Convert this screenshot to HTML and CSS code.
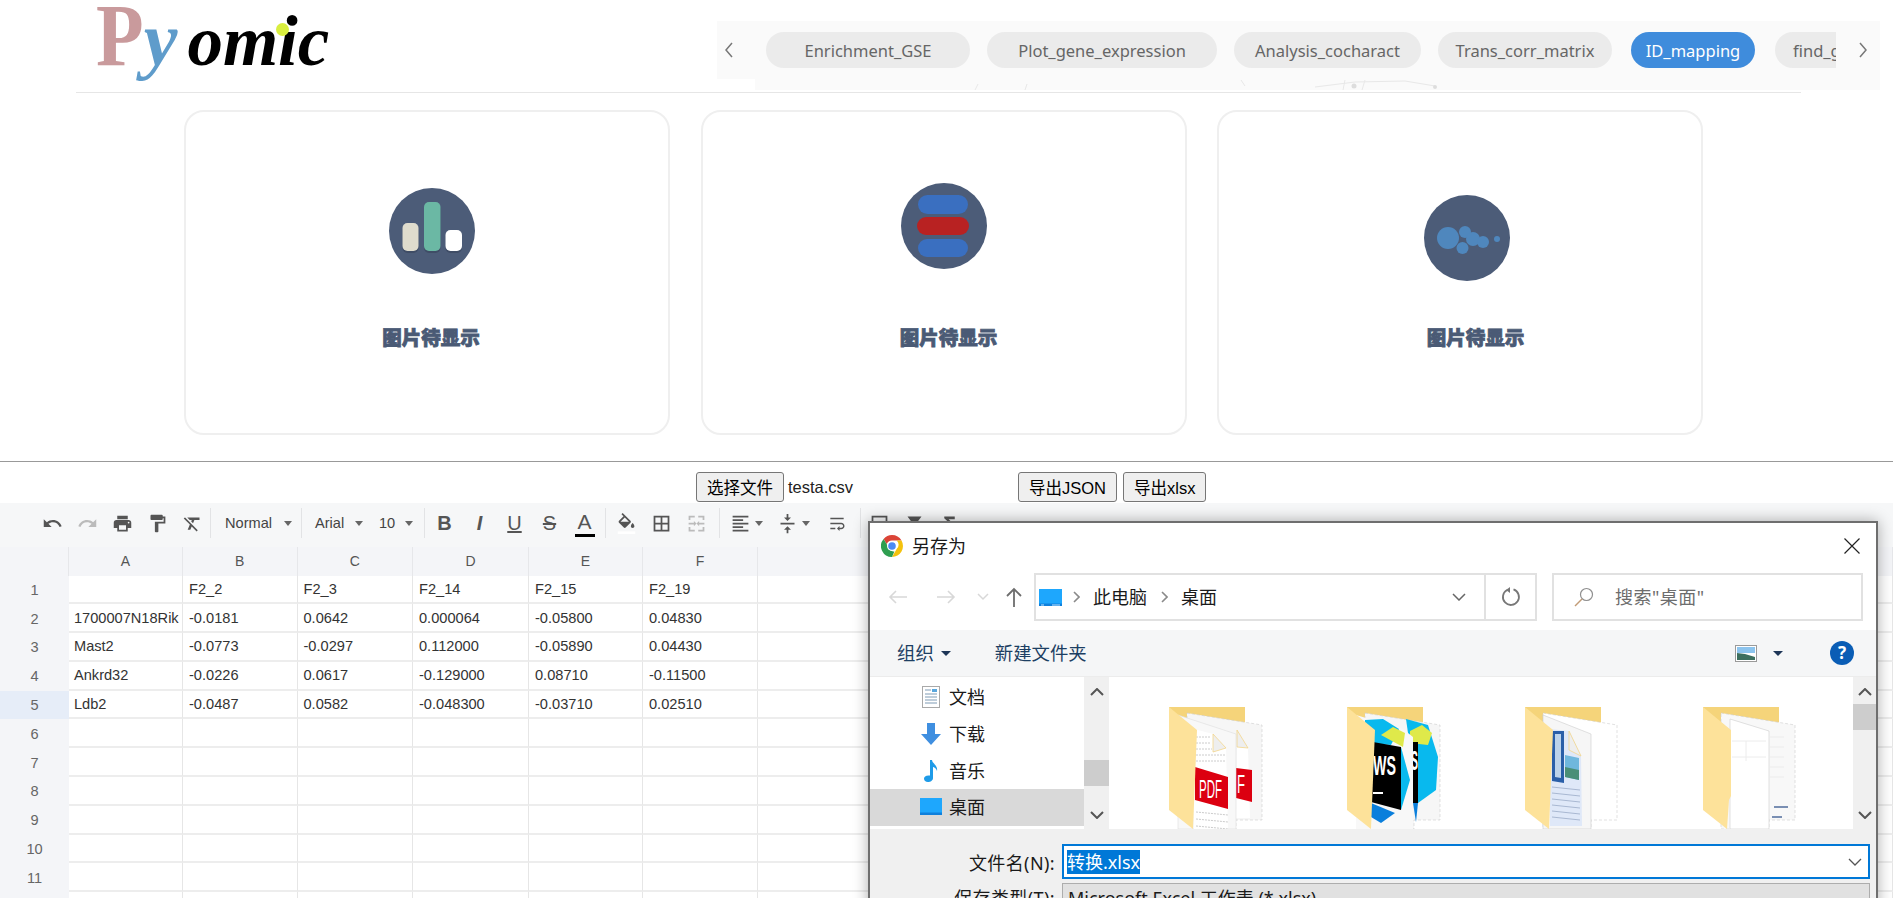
FILE: index.html
```html
<!DOCTYPE html>
<html lang="zh-CN">
<head>
    <meta charset="UTF-8">
    <meta name="viewport" content="width=device-width, initial-scale=1.0">
    <title>Pyomic</title>
    <link rel="stylesheet" href="styles.css">
</head>
<body>
    <header class="header">
        <div class="logo"><span class="logo-p">P</span><span class="logo-y">y</span><span class="logo-rest">omic</span><i class="logo-dot"></i></div>
        <div class="tab-area">
            <nav class="tab-bar">
                <svg class="tab-arrow" viewBox="0 0 12 20"><path d="M9 3L3 10l6 7" fill="none" stroke="#777" stroke-width="1.5"/></svg>
                <div class="tabs">
                    <span class="tab">Enrichment_GSE</span>
                    <span class="tab">Plot_gene_expression</span>
                    <span class="tab">Analysis_cocharact</span>
                    <span class="tab">Trans_corr_matrix</span>
                    <span class="tab active">ID_mapping</span>
                    <span class="tab">find_gene</span>
                </div>
                <svg class="tab-arrow" viewBox="0 0 12 20"><path d="M3 3l6 7-6 7" fill="none" stroke="#777" stroke-width="1.5"/></svg>
            </nav>
            <div class="tab-strip">
                <svg viewBox="0 0 1125 11" preserveAspectRatio="none"><path d="M220 11l3-6M270 11l2-6M490 7l-4-6M560 8l40-5 50-1 30 5M590 1l-2 10M610 1l-3 10" fill="none" stroke="#e8e8e8"/><circle cx="599" cy="7" r="2.5" fill="#ddd"/><circle cx="680" cy="8" r="2" fill="#ddd"/></svg>
            </div>
        </div>
    </header>
    <div class="header-rule"></div>

    <section class="cards">
        <div class="card">
            <svg class="pic pic-bars" viewBox="0 0 86 86">
                <circle cx="43" cy="43" r="43" fill="#4c5c78"/>
                <rect x="13.5" y="37" width="16" height="28" rx="5" fill="#3f4d66"/>
                <rect x="13.5" y="35" width="16" height="28" rx="5" fill="#dfdccd"/>
                <rect x="35" y="16" width="16.5" height="49" rx="5" fill="#3f4d66"/>
                <rect x="35" y="14" width="16.5" height="49" rx="5" fill="#6bb8a4"/>
                <rect x="56.5" y="44" width="16.5" height="21" rx="5" fill="#3f4d66"/>
                <rect x="56.5" y="42" width="16.5" height="21" rx="5" fill="#fff"/>
            </svg>
            <p class="pic-label label-bars">图片待显示</p>
        </div>
        <div class="card">
            <svg class="pic pic-stack" viewBox="0 0 86 86">
                <circle cx="43" cy="43" r="43" fill="#4c5c78"/>
                <rect x="17" y="12" width="50" height="19" rx="9.5" fill="#3a6fc0"/>
                <rect x="16" y="34" width="52" height="18" rx="9" fill="#b82222"/>
                <rect x="17" y="56" width="50" height="18" rx="9" fill="#3a6fc0"/>
            </svg>
            <p class="pic-label label-stack">图片待显示</p>
        </div>
        <div class="card">
            <svg class="pic pic-bubbles" viewBox="0 0 86 86">
                <circle cx="43" cy="43" r="43" fill="#4c5c78"/>
                <g fill="#4f87bd">
                    <circle cx="24" cy="43" r="11"/>
                    <circle cx="41" cy="37" r="6"/>
                    <circle cx="49" cy="44" r="7"/>
                    <circle cx="59" cy="47" r="6"/>
                    <circle cx="38.5" cy="53" r="6"/>
                    <circle cx="73" cy="44" r="3"/>
                </g>
            </svg>
            <p class="pic-label label-bubbles">图片待显示</p>
        </div>
    </section>

    <div class="upload-row">
        <button class="btn">选择文件</button>
        <span class="file-name">testa.csv</span>
        <button class="btn">导出JSON</button>
        <button class="btn">导出xlsx</button>
    </div>

    <div class="sheet-toolbar">
        <span class="tool"><svg viewBox="0 0 24 24"><path d="M12.5 8c-2.65 0-5.05.99-6.9 2.6L2 7v9h9l-3.62-3.62c1.39-1.16 3.16-1.88 5.12-1.88 3.54 0 6.55 2.31 7.6 5.5l2.37-.78C21.08 11.03 17.15 8 12.5 8z"/></svg></span>
        <span class="tool off"><svg viewBox="0 0 24 24"><path d="M18.4 10.6C16.55 8.99 14.15 8 11.5 8c-4.65 0-8.58 3.03-9.96 7.22L3.9 16c1.05-3.19 4.05-5.5 7.6-5.5 1.95 0 3.73.72 5.12 1.88L13 16h9V7l-3.6 3.6z"/></svg></span>
        <span class="tool"><svg viewBox="0 0 24 24"><path d="M19 8H5c-1.66 0-3 1.34-3 3v6h4v4h12v-4h4v-6c0-1.66-1.34-3-3-3zm-3 11H8v-5h8v5zm3-7c-.55 0-1-.45-1-1s.45-1 1-1 1 .45 1 1-.45 1-1 1zm-1-9H6v4h12V3z"/></svg></span>
        <span class="tool"><svg viewBox="0 0 24 24"><path d="M18 4V3c0-.55-.45-1-1-1H5c-.55 0-1 .45-1 1v4c0 .55.45 1 1 1h12c.55 0 1-.45 1-1V6h1v4H9v11c0 .55.45 1 1 1h2c.55 0 1-.45 1-1v-9h8V4h-3z"/></svg></span>
        <span class="tool"><svg viewBox="0 0 24 24"><path d="M3.27 5L2 6.27l6.97 6.97L6.5 19h3l1.57-3.66L16.73 21 18 19.73 3.55 5.27 3.27 5zM6 5v.18L8.82 8h2.4l-.72 1.68 2.1 2.1L14.21 8H20V5H6z"/></svg></span>
        <i class="sep"></i>
        <span class="pick pick-style">Normal<b class="caret"></b></span>
        <i class="sep sep-style"></i>
        <span class="pick pick-font">Arial<b class="caret"></b></span>
        <span class="pick pick-size">10<b class="caret"></b></span>
        <i class="sep sep-size"></i>
        <span class="tool letter first-letter"><b>B</b></span>
        <span class="tool letter"><b><em>I</em></b></span>
        <span class="tool letter"><u>U</u></span>
        <span class="tool letter"><s>S</s></span>
        <span class="tool letter color-a">A</span>
        <i class="sep sep-text"></i>
        <span class="tool tool-fill"><svg viewBox="0 0 24 24"><path d="M16.56 8.94L7.62 0 6.21 1.41l2.38 2.38-5.15 5.15c-.59.59-.59 1.54 0 2.12l5.5 5.5c.29.29.68.44 1.06.44s.77-.15 1.06-.44l5.5-5.5c.59-.58.59-1.53 0-2.12zM5.21 10L10 5.21 14.79 10H5.21zM19 11.5s-2 2.17-2 3.5c0 1.1.9 2 2 2s2-.9 2-2c0-1.33-2-3.5-2-3.5z"/><path d="M2 21h20v3H2z" fill="#fff"/></svg></span>
        <span class="tool"><svg viewBox="0 0 24 24"><path d="M3 3v18h18V3H3zm8 16H5v-6h6v6zm0-8H5V5h6v6zm8 8h-6v-6h6v6zm0-8h-6V5h6v6z"/></svg></span>
        <span class="tool off"><svg viewBox="0 0 24 24"><path d="M3 3h7v2H5v3H3zm11 0h7v5h-2V5h-5zM3 16h2v3h5v2H3zm16 0h2v5h-7v-2h5zM3 11h6V9l3 3-3 3v-2H3zm18 0v2h-6v2l-3-3 3-3v2z"/></svg></span>
        <i class="sep sep-grid"></i>
        <span class="tool tool-caret tool-align"><svg viewBox="0 0 24 24"><path d="M15 15H3v2h12v-2zm0-8H3v2h12V7zM3 13h18v-2H3v2zm0 8h18v-2H3v2zM3 3v2h18V3H3z"/></svg><b class="caret"></b></span>
        <span class="tool tool-caret tool-valign"><svg viewBox="0 0 24 24"><path d="M8 19h3v4h2v-4h3l-4-4-4 4zm8-14h-3V1h-2v4H8l4 4 4-4zM4 11v2h16v-2H4z"/></svg><b class="caret"></b></span>
        <span class="tool tool-wrap"><svg viewBox="0 0 24 24"><path d="M4 19h6v-2H4v2zM20 5H4v2h16V5zm-3 6H4v2h13.25c1.1 0 2 .9 2 2s-.9 2-2 2H15v-2l-3 3 3 3v-2h2c2.21 0 4-1.79 4-4s-1.79-4-4-4z"/></svg></span>
        <i class="sep sep-wrap"></i>
        <span class="tool tool-tail"><svg viewBox="0 0 24 24"><path d="M3 3h18v18H3zm2 2v14h14V5z"/></svg></span>
        <span class="tool"><svg viewBox="0 0 24 24"><path d="M4 4h16l-6 8v7l-4 2v-9z"/></svg></span>
        <span class="tool"><svg viewBox="0 0 24 24"><path d="M18 4H6v2l6.5 6L6 18v2h12v-3h-7l5-5-5-5h7z"/></svg></span>
    </div>

    <table class="grid">
        <colgroup>
            <col class="col-head"><col class="col-a"><col class="col-b"><col class="col-c"><col class="col-d"><col class="col-e"><col class="col-f"><col>
        </colgroup>
        <thead>
            <tr><th></th><th>A</th><th>B</th><th>C</th><th>D</th><th>E</th><th>F</th><th>G</th></tr>
        </thead>
        <tbody>
            <tr><th>1</th><td></td><td>F2_2</td><td>F2_3</td><td>F2_14</td><td>F2_15</td><td>F2_19</td><td></td></tr>
            <tr><th>2</th><td>1700007N18Rik</td><td>-0.0181</td><td>0.0642</td><td>0.000064</td><td>-0.05800</td><td>0.04830</td><td></td></tr>
            <tr><th>3</th><td>Mast2</td><td>-0.0773</td><td>-0.0297</td><td>0.112000</td><td>-0.05890</td><td>0.04430</td><td></td></tr>
            <tr><th>4</th><td>Ankrd32</td><td>-0.0226</td><td>0.0617</td><td>-0.129000</td><td>0.08710</td><td>-0.11500</td><td></td></tr>
            <tr><th class="row-on">5</th><td>Ldb2</td><td>-0.0487</td><td>0.0582</td><td>-0.048300</td><td>-0.03710</td><td>0.02510</td><td></td></tr>
            <tr><th>6</th><td></td><td></td><td></td><td></td><td></td><td></td><td></td></tr>
            <tr><th>7</th><td></td><td></td><td></td><td></td><td></td><td></td><td></td></tr>
            <tr><th>8</th><td></td><td></td><td></td><td></td><td></td><td></td><td></td></tr>
            <tr><th>9</th><td></td><td></td><td></td><td></td><td></td><td></td><td></td></tr>
            <tr><th>10</th><td></td><td></td><td></td><td></td><td></td><td></td><td></td></tr>
            <tr><th>11</th><td></td><td></td><td></td><td></td><td></td><td></td><td></td></tr>
            <tr><th></th><td></td><td></td><td></td><td></td><td></td><td></td><td></td></tr>
        </tbody>
    </table>

    <!-- save dialog over the sheet -->
    <div class="dialog">
        <div class="dlg-title">
            <svg class="chrome" viewBox="0 0 22 22">
                <path d="M11 0a11 11 0 0 1 9.5 5.5H11a5.5 5.5 0 0 0-5.2 3.7L2.6 3.9A11 11 0 0 1 11 0z" fill="#db4437"/>
                <path d="M20.5 5.5A11 11 0 0 1 11 22l4.8-8.2a5.5 5.5 0 0 0-.2-8.3z" fill="#f4c20d"/>
                <path d="M11 22A11 11 0 0 1 2.6 3.9l4.8 8.2a5.5 5.5 0 0 0 6 4.3z" fill="#2f9e50"/>
                <circle cx="11" cy="11" r="5" fill="#fff"/>
                <circle cx="11" cy="11" r="3.8" fill="#4c8bf5"/>
            </svg>
            <span class="dlg-name">另存为</span>
            <svg class="dlg-close" viewBox="0 0 16 16"><path d="M.5.5l15 15M15.5.5l-15 15" stroke="#222" stroke-width="1.2"/></svg>
        </div>
        <div class="dlg-nav">
            <svg class="nav-back" viewBox="0 0 20 14"><path d="M19 7H2m6-6L2 7l6 6" fill="none" stroke="#d8d8d8" stroke-width="1.6"/></svg>
            <svg class="nav-fwd" viewBox="0 0 20 14"><path d="M1 7h17m-6-6l6 6-6 6" fill="none" stroke="#d8d8d8" stroke-width="1.6"/></svg>
            <svg class="nav-down" viewBox="0 0 12 8"><path d="M1 1l5 5 5-5" fill="none" stroke="#d8d8d8" stroke-width="1.5"/></svg>
            <svg class="nav-up" viewBox="0 0 16 20"><path d="M8 20V2M1 9l7-7 7 7" fill="none" stroke="#6d6d6d" stroke-width="1.8"/></svg>
            <div class="address">
                <svg class="desk-icon" viewBox="0 0 23 17"><rect width="23" height="17" fill="#0f80dc"/><rect y="0" width="23" height="14.5" fill="#1ea7fd"/><path d="M2 16h3m8 0h8" stroke="#bfe4ff"/></svg>
                <svg class="crumb" viewBox="0 0 7 12"><path d="M1 1l5 5-5 5" fill="none" stroke="#8a8a8a" stroke-width="1.6"/></svg>
                <span>此电脑</span>
                <svg class="crumb" viewBox="0 0 7 12"><path d="M1 1l5 5-5 5" fill="none" stroke="#8a8a8a" stroke-width="1.6"/></svg>
                <span>桌面</span>
                <svg class="addr-drop" viewBox="0 0 14 8"><path d="M1 1l6 6 6-6" fill="none" stroke="#666" stroke-width="1.5"/></svg>
                <div class="addr-refresh">
                    <svg viewBox="0 0 20 20"><path d="M12.5 2.4A8 8 0 1 1 6 3" fill="none" stroke="#777" stroke-width="1.8"/><path d="M9 0v6L5 3z" fill="#777"/></svg>
                </div>
            </div>
            <div class="search">
                <svg viewBox="0 0 20 20"><circle cx="12.5" cy="7.5" r="6" fill="none" stroke="#8f8f8f" stroke-width="1.2"/><path d="M8 12l-7 7" stroke="#c29b76" stroke-width="1.4"/></svg>
                <span>搜索"桌面"</span>
            </div>
        </div>
        <div class="dlg-toolbar">
            <span>组织</span><b class="dlg-caret"></b>
            <span class="new-folder">新建文件夹</span>
            <svg class="view-icon" viewBox="0 0 22 17"><rect x=".5" y=".5" width="21" height="16" fill="#fff" stroke="#9a9a9a"/><rect x="2" y="2" width="18" height="6" fill="#8cc4ee"/><path d="M2 8l8 1 10 3v3H2z" fill="#3c6f5f"/></svg>
            <b class="dlg-caret view-caret"></b>
            <span class="help">?</span>
        </div>
        <div class="dlg-body">
            <ul class="side-nav">
                <li>
                    <svg viewBox="0 0 24 24"><rect x="3.5" y="1.5" width="17" height="21" fill="#fff" stroke="#a9a9a9"/><path d="M6 5h6M6 9h12M6 12h12M6 15h12M6 18h12" stroke="#7f9bb5"/><rect x="13" y="4" width="5" height="3" fill="#5aa7dd"/></svg>
                    文档
                </li>
                <li>
                    <svg viewBox="0 0 24 24"><path d="M8 1h8v11h6L12 23 2 12h6z" fill="#3f8fe0"/></svg>
                    下载
                </li>
                <li>
                    <svg viewBox="0 0 24 24"><path d="M11 1h2c.5 4 6 5 5 11-1-3-3-4-4-4v11c0 2.5-2.5 4-5 4s-4-1.5-4-3.5S7 16 11 16.5z" fill="#1e9be8"/></svg>
                    音乐
                </li>
                <li class="on">
                    <svg viewBox="0 0 24 24"><rect x="1" y="3" width="22" height="17" fill="#0f80dc"/><rect x="1" y="3" width="22" height="14.5" fill="#1ea7fd"/></svg>
                    桌面
                </li>
            </ul>
            <div class="vscroll vscroll-nav">
                <svg class="chev" viewBox="0 0 14 8"><path d="M1 7l6-6 6 6" fill="none" stroke="#555" stroke-width="2"/></svg>
                <i class="thumb"></i>
                <svg class="chev chev-down" viewBox="0 0 14 8"><path d="M1 1l6 6 6-6" fill="none" stroke="#555" stroke-width="2"/></svg>
            </div>
            <div class="folders">
                <svg class="folder" viewBox="0 0 100 122">
                    <path d="M1 0h76v60H1z" fill="#f5d47a"/>
                    <path d="M19 6l75 12v95H68v9H19z" fill="#f6f6f6" stroke="#ccc" stroke-dasharray="3 2" stroke-width=".6"/>
                    <path d="M69 23l11 18 2 70H68z" fill="#fff"/>
                    <path d="M69 23l11 18-11-1z" fill="#eee" stroke="#f2d68c" stroke-width=".8"/>
                    <path d="M68 61l16 2v32l-16-4z" fill="#dc0010"/>
                    <text class="pdf" x="69" y="86" textLength="8" lengthAdjust="spacingAndGlyphs">F</text>
                    <path d="M10 8l58 19v95H10z" fill="#f8f8f8" stroke="#ddd" stroke-width=".6"/>
                    <path d="M26 22l19 5 13 14 2 81H26z" fill="#fff"/>
                    <path d="M45 27l13 14-13 4z" fill="#eee" stroke="#f2d68c" stroke-width=".8"/>
                    <path d="M28 30h14M28 36h14M28 42h16M28 48h30M28 54h30M28 105l32 3M28 112l32 3M28 119l32 3" stroke="#ccc" stroke-dasharray="2 1"/>
                    <path d="M27 60l33 10v32l-33-9z" fill="#dc0010"/>
                    <text class="pdf" x="31" y="91" textLength="23" lengthAdjust="spacingAndGlyphs">PDF</text>
                    <path d="M1 0l28 23-4 99L1 103z" fill="#fde29a"/>
                </svg>
                <svg class="folder" viewBox="0 0 100 122">
                    <path d="M1 0h76v60H1z" fill="#f5d47a"/>
                    <path d="M19 6l75 12v95H68v9H19z" fill="#f6f6f6" stroke="#ccc" stroke-dasharray="3 2" stroke-width=".6"/>
                    <path d="M60 12l22 6 10 32-2 33-18 13z" fill="#08b9ee"/>
                    <path d="M64 24l12-6 10 8-4 12-18-2z" fill="#dfe94a"/>
                    <rect x="64" y="35" width="8" height="61" fill="#000"/>
                    <text class="ws" x="65" y="63" textLength="7" lengthAdjust="spacingAndGlyphs">S</text>
                    <path d="M67 96l5 0-2 19z" fill="#0a7fdc"/>
                    <path d="M10 8l47 14 10 8v92H10z" fill="#f8f8f8"/>
                    <path d="M19 13l18-1 16 10-8 16-26-2z" fill="#08b9ee"/>
                    <path d="M35 28l12-8 12 6-2 14z" fill="#dfe94a"/>
                    <path d="M55 40l9 33-9 30z" fill="#08b9ee"/>
                    <path d="M25 96l24 10-14 10-10-6z" fill="#0a7fdc"/>
                    <path d="M27 35l28 5v63l-30-8z" fill="#000"/>
                    <text class="ws" x="27" y="68" textLength="23" lengthAdjust="spacingAndGlyphs">WS</text>
                    <path d="M27 86h10" stroke="#fff" stroke-width="2"/>
                    <path d="M1 0l28 23-4 99L1 103z" fill="#fde29a"/>
                </svg>
                <svg class="folder" viewBox="0 0 100 122">
                    <path d="M1 0h76v60H1z" fill="#f5d47a"/>
                    <path d="M19 6l74 12v95H67v9H19z" fill="#fff" stroke="#ccc" stroke-dasharray="3 2" stroke-width=".6"/>
                    <path d="M19 8l48 19v95H19z" fill="#f6f6f6" stroke="#ccc" stroke-width=".6"/>
                    <path d="M26 22l19 2 12 25 1 70H26z" fill="#dfe8f8"/>
                    <path d="M45 24l12 25-12-6z" fill="#eee" stroke="#f2d68c" stroke-width=".8"/>
                    <path d="M28 24h12v52l-12-2z" fill="#2a5fa8"/>
                    <path d="M31 27h6v44l-6-1z" fill="#bcd3ea"/>
                    <path d="M41 48l14 3v22l-14-3z" fill="#6fb7dd"/>
                    <path d="M41 60l14 3v10l-14-3z" fill="#4a8f77"/>
                    <path d="M28 80l28 3M28 86l28 3M28 92l28 3M28 98l28 3M28 104l28 3M28 110l28 3" stroke="#a9b8d2"/>
                    <path d="M1 0l28 23-4 99L1 103z" fill="#fde29a"/>
                </svg>
                <svg class="folder" viewBox="0 0 100 122">
                    <path d="M1 0h76v60H1z" fill="#f5d47a"/>
                    <path d="M19 6l74 12v95H67v9H19z" fill="#f8f8f8" stroke="#ccc" stroke-dasharray="3 2" stroke-width=".6"/>
                    <path d="M28 12l39 12v98H28z" fill="#fff" stroke="#ccc" stroke-width=".6"/>
                    <path d="M30 34h34M30 50h34M44 34v20M68 30h14M68 40h14M68 50h14M68 60h14M68 70h14" stroke="#ececec"/>
                    <path d="M72 100h14M70 110h10" stroke="#7a8fb3" stroke-width="2"/>
                    <path d="M1 0l28 23v66l-2 4-2 29L1 103z" fill="#fde29a"/>
                </svg>
            </div>
            <div class="vscroll vscroll-main">
                <svg class="chev" viewBox="0 0 14 8"><path d="M1 7l6-6 6 6" fill="none" stroke="#555" stroke-width="2"/></svg>
                <i class="thumb"></i>
                <svg class="chev chev-down" viewBox="0 0 14 8"><path d="M1 1l6 6 6-6" fill="none" stroke="#555" stroke-width="2"/></svg>
            </div>
        </div>
        <div class="dlg-foot">
            <div class="field">
                <label>文件名(N):</label>
                <div class="input input-active">
                    <span class="selected">转换.xlsx</span>
                    <svg viewBox="0 0 14 8"><path d="M1 1l6 6 6-6" fill="none" stroke="#555" stroke-width="1.3"/></svg>
                </div>
            </div>
            <div class="field">
                <label>保存类型(T):</label>
                <div class="input input-type"><span>Microsoft Excel 工作表 (*.xlsx)</span></div>
            </div>
        </div>
    </div>
</body>
</html>
```

FILE: styles.css
```css
* {
    box-sizing: border-box;
}
body {
    margin: 0;
    height: 898px;
    overflow: hidden;
    position: relative;
    background-color: #fff;
    font-family: "Liberation Sans", "Noto Sans CJK SC", sans-serif;
}

/* header */
.header {
    display: flex;
    height: 92px;
}
.logo {
    position: relative;
    display: flex;
    align-items: baseline;
    height: 90px;
    margin-left: 96px;
    font-family: "Liberation Serif", serif;
    font-weight: 700;
    font-style: italic;
    line-height: 1;
}
.logo-p {
    font-size: 78px;
    font-style: normal;
    color: #c99a9c;
    transform: scaleY(1.15);
    transform-origin: 50% 84%;
}
.logo-y {
    font-size: 76px;
    color: #5f9ccb;
}
.logo-rest {
    font-size: 71px;
    color: #000;
    margin-left: 10px;
}
.logo-dot {
    position: absolute;
    left: 180px;
    top: 23px;
    width: 13px;
    height: 13px;
    border-radius: 50%;
    background-color: #d9ee3f;
}
.tab-area {
    width: 1163px;
    margin: 21px 13px 0 auto;
}
.tab-bar {
    display: flex;
    align-items: center;
    height: 58px;
    background-color: #fafafa;
}
.tab-strip {
    height: 11px;
    margin-left: 38px;
    background-color: #fafafa;
}
.tab-strip svg {
    display: block;
    width: 100%;
    height: 11px;
}
.tab-arrow {
    width: 12px;
    height: 20px;
    flex: none;
    margin-left: 6px;
}
.tabs {
    display: flex;
    gap: 17px;
    width: 1070px;
    margin: 0 15px 0 31px;
    overflow: hidden;
}
.tab {
    flex: none;
    height: 36px;
    line-height: 38px;
    border-radius: 18px;
    background-color: #ebebeb;
    color: #666;
    font-family: "Noto Sans", sans-serif;
    font-size: 16.5px;
    text-align: center;
}
.tab:nth-child(1) { width: 204px; }
.tab:nth-child(2) { width: 230px; }
.tab:nth-child(3) { width: 187px; }
.tab:nth-child(4) { width: 174px; margin-right: 2px; }
.tab:nth-child(5) { width: 124px; margin-right: 3px; }
.tab:nth-child(6) { width: 124px; text-align: left; padding-left: 18px; }
.tab.active {
    background-color: #3f8cdc;
    color: #fff;
}
.header-rule {
    height: 1px;
    margin: 0 92px 0 76px;
    background-color: #e6e6e6;
}

/* picture cards */
.cards {
    display: flex;
    gap: 30.5px;
    padding: 17px 0 26px 184px;
}
.card {
    display: flex;
    flex-direction: column;
    align-items: center;
    width: 486px;
    height: 325px;
    border: 2px solid #efefef;
    border-radius: 20px;
}
.pic {
    width: 86px;
    height: 86px;
    flex: none;
}
.pic-bars { margin: 76px 0 53px 10px; }
.pic-stack { margin: 71px 0 58px; }
.pic-bubbles { margin: 83px 0 46px 13px; }
.pic-label {
    margin: 0;
    color: #4a5a75;
    font-family: "Noto Sans CJK SC", sans-serif;
    font-size: 19.5px;
    font-weight: 900;
    line-height: 20px;
    -webkit-text-stroke: .8px #4a5a75;
}
.label-bars { margin-left: 8px; }
.label-stack { margin-left: 10px; }
.label-bubbles { margin-left: 31px; }

/* file row */
.upload-row {
    display: flex;
    align-items: flex-start;
    gap: 6px;
    height: 42px;
    padding: 10px 0 0 696px;
    border-top: 1px solid #999;
    font-size: 16.5px;
}
.btn {
    height: 30px;
    padding: 0 10px;
    border: 1px solid #767676;
    border-radius: 3px;
    background-color: #efefef;
    color: #000;
    font: inherit;
}
.file-name {
    width: 224px;
    margin-left: -2px;
    line-height: 30px;
    color: #222;
}

/* sheet toolbar */
.sheet-toolbar {
    display: flex;
    align-items: center;
    height: 44px;
    padding: 0 0 4px 35px;
    background-color: #f6f7f8;
    color: #555;
    font-size: 14.6px;
}
.tool {
    display: flex;
    align-items: center;
    justify-content: center;
    flex: none;
    width: 35px;
    height: 24px;
}
.tool svg {
    width: 21px;
    height: 21px;
    fill: #555;
}
.tool.off svg {
    fill: #bbb;
}
.sep {
    flex: none;
    width: 1px;
    height: 30px;
    background-color: #e2e3e5;
}
.pick {
    display: flex;
    align-items: center;
    justify-content: space-between;
    flex: none;
    color: #444;
}
.caret {
    width: 0;
    height: 0;
    border: 4px solid transparent;
    border-top: 5px solid #666;
    border-bottom: 0;
}
.pick-style { width: 67px; margin-left: 14px; }
.sep-style { margin-left: 9px; }
.pick-font { width: 48px; margin-left: 13px; }
.pick-size { width: 34px; margin-left: 16px; }
.sep-size { margin-left: 11px; }
.letter {
    font-size: 20px;
    color: #555;
}
.first-letter { margin-left: 2px; }
.color-a {
    height: 30px;
    line-height: 24px;
    font-size: 21px;
    flex-direction: column;
}
.color-a::after {
    content: "";
    width: 20px;
    height: 3px;
    background-color: #000;
}
.sep-text { margin-left: 3px; }
.tool-fill { margin-left: 3px; }
.sep-grid { margin-left: 5px; }
.tool-caret {
    width: 33px;
    justify-content: space-between;
}
.tool-align { margin-left: 10px; }
.tool-valign { margin-left: 14px; }
.tool-wrap { width: 20px; margin-left: 17px; }
.sep-wrap { margin-left: 13px; }
.tool-tail { margin-left: 1px; }

/* sheet grid */
.grid {
    width: 100%;
    table-layout: fixed;
    border-collapse: separate;
    border-spacing: 0;
    font-size: 14.6px;
    color: #333;
}
.col-head { width: 69px; }
.col-a { width: 114px; }
.col-b { width: 114.5px; }
.col-c { width: 115.5px; }
.col-d { width: 116px; }
.col-e { width: 114px; }
.col-f { width: 115px; }
.grid thead th {
    height: 28.5px;
    border-right: 1px solid #e6e7ea;
    background-color: #f4f5f8;
    color: #555;
    font-size: 14px;
    font-weight: 400;
}
.grid tbody th {
    background-color: #f4f5f8;
    color: #666;
    font-size: 14.6px;
    font-weight: 400;
}
.grid tbody th.row-on {
    background-color: #e6edf8;
}
.grid td, .grid tbody th {
    height: 28.8px;
    padding: 0;
    white-space: nowrap;
    overflow: hidden;
}
.grid td {
    padding-left: 6px;
    border-right: 1px solid #e6e6e6;
    border-bottom: 2px solid #ededed;
}
.grid td:nth-child(2) {
    padding-left: 5px;
}

/* save dialog */
.dialog {
    position: absolute;
    left: 868px;
    top: 521px;
    width: 1010px;
    height: 420px;
    border: 2px solid #6e6e6e;
    border-bottom: 0;
    background-color: #fff;
    box-shadow: 0 0 14px rgba(0, 0, 0, .32);
    font-family: "Noto Sans", "Noto Sans CJK SC", sans-serif;
    font-size: 18px;
    line-height: 24px;
    color: #1a1a1a;
}
.dlg-title {
    display: flex;
    align-items: center;
    height: 50px;
    padding: 0 16px 5px 11px;
}
.chrome {
    width: 22px;
    height: 22px;
}
.dlg-name {
    margin-left: 9px;
}
.dlg-close {
    width: 16px;
    height: 16px;
    margin-left: auto;
}
.dlg-nav {
    display: flex;
    align-items: center;
    height: 48px;
}
.nav-back {
    width: 20px;
    margin-left: 18px;
}
.nav-fwd {
    width: 20px;
    margin-left: 28px;
}
.nav-down {
    width: 12px;
    margin-left: 21px;
}
.nav-up {
    width: 16px;
    height: 20px;
    margin-left: 17px;
}
.address, .search {
    display: flex;
    align-items: center;
    height: 48px;
    border: 2px solid #e1e1e1;
}
.address {
    width: 503px;
    margin-left: 12px;
    padding-left: 3px;
}
.desk-icon {
    width: 23px;
    height: 17px;
}
.crumb {
    width: 7px;
    height: 12px;
    margin: 0 13px 0 11px;
}
.address span + .crumb {
    margin-left: 14px;
}
.addr-drop {
    width: 14px;
    height: 8px;
    margin: 0 18px 0 auto;
}
.addr-refresh {
    display: flex;
    align-items: center;
    justify-content: center;
    width: 51px;
    height: 100%;
    border-left: 2px solid #e1e1e1;
}
.addr-refresh svg {
    width: 20px;
    height: 20px;
}
.search {
    width: 311px;
    margin-left: 15px;
    padding-left: 20px;
    color: #6d6d6d;
    letter-spacing: .5px;
}
.search svg {
    width: 20px;
    height: 20px;
    margin-right: 21px;
}
.dlg-toolbar {
    display: flex;
    align-items: center;
    height: 47px;
    margin-top: 9px;
    padding: 0 22px 0 27px;
    background-color: #f5f6f7;
    border-bottom: 1px solid #ececec;
    color: #1d3f63;
    font-size: 18.4px;
}
.dlg-caret {
    width: 0;
    height: 0;
    margin-left: 7px;
    border: 5px solid transparent;
    border-top: 5px solid #1d3557;
    border-bottom: 0;
}
.new-folder {
    margin-left: 44px;
}
.view-icon {
    width: 22px;
    height: 17px;
    margin-left: auto;
}
.view-caret {
    margin-left: 16px;
}
.help {
    width: 24px;
    height: 24px;
    margin-left: 47px;
    border-radius: 50%;
    background-color: #0a5db5;
    color: #fff;
    font-weight: 700;
    font-size: 17px;
    text-align: center;
}
.dlg-body {
    display: flex;
    height: 152px;
}
.side-nav {
    width: 214px;
    margin: 0;
    padding: 2px 0 0;
    list-style: none;
}
.side-nav li {
    display: flex;
    align-items: center;
    gap: 6px;
    height: 36.7px;
    padding-left: 49px;
}
.side-nav li.on {
    background-color: #d9d9d9;
}
.side-nav svg {
    width: 24px;
    height: 24px;
}
.vscroll {
    display: flex;
    flex-direction: column;
    align-items: center;
    flex: none;
    height: 152px;
    background-color: #f0f0f0;
}
.vscroll-nav {
    width: 25px;
    margin-right: 3px;
}
.vscroll-main {
    width: 23px;
}
.chev {
    width: 14px;
    height: 8px;
    margin-top: 11px;
    flex: none;
}
.chev-down {
    margin-top: auto;
    margin-bottom: 10px;
}
.thumb {
    width: 100%;
    height: 26px;
    background-color: #cdcdcd;
}
.vscroll-nav .thumb {
    margin-top: 64px;
}
.vscroll-main .thumb {
    margin-top: 8px;
}
.folders {
    display: flex;
    gap: 78px;
    flex: 1;
    height: 152px;
    padding: 30px 0 0 56px;
    overflow: hidden;
}
.folder {
    width: 100px;
    height: 122px;
    flex: none;
}
.pdf {
    fill: #fff;
    font-family: "Liberation Sans", sans-serif;
    font-size: 25px;
}
.ws {
    fill: #fff;
    font-family: "Liberation Sans", sans-serif;
    font-size: 27px;
    font-weight: 700;
}
.dlg-foot {
    height: 80px;
    padding-top: 15px;
    background-color: #f0f0f0;
}
.field {
    display: flex;
    gap: 7px;
    margin-bottom: 4px;
}
.field label {
    width: 185px;
    height: 35px;
    line-height: 38px;
    letter-spacing: .4px;
    text-align: right;
}
.field + .field label {
    line-height: 30px;
}
.input {
    display: flex;
    align-items: center;
    justify-content: space-between;
    width: 808px;
    height: 35px;
    padding: 0 6px 0 3px;
}
.input svg {
    width: 14px;
    height: 8px;
}
.input-active {
    border: 2px solid #0078d7;
    background-color: #fff;
}
.selected {
    background-color: #0078d7;
    color: #fff;
}
.input-type {
    border: 1px solid #adadad;
    background-color: #e1e1e1;
    padding: 0 0 6px 5px;
}
```
